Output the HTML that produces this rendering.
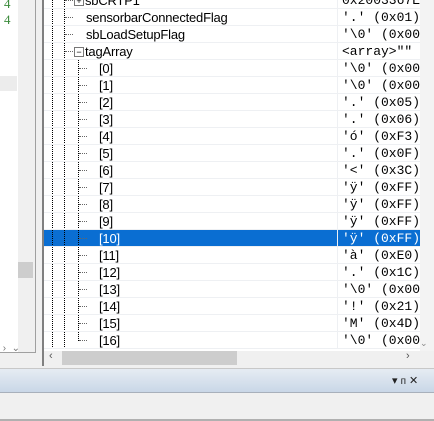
<!DOCTYPE html><html><head><style>
body{margin:0;width:434px;height:421px;overflow:hidden;background:#f0f0f0;font-family:"Liberation Sans",sans-serif;position:relative}
.a{position:absolute}
.row{position:absolute;left:44px;width:376px;height:17px;border-bottom:1px solid #eef0f3;box-sizing:border-box;background:#fff;overflow:hidden}
.n{position:absolute;font-size:13px;top:1px;color:#000;letter-spacing:-0.2px}
.v{position:absolute;left:298px;font-family:"Liberation Mono",monospace;font-size:13px;top:1px;color:#000;white-space:pre}
.sep{position:absolute;left:293px;top:0;width:1px;height:17px;background:#eef0f3}
.vl{position:absolute;border-left:1px dotted #000}
.hl{position:absolute;border-top:1px dotted #666;width:8px}
</style></head><body>
<div class="a" style="left:0;top:0;width:18px;height:352px;background:#fff"></div>
<div class="a" style="left:0;top:76px;width:17px;height:15px;background:#ececec"></div>
<div class="a" style="left:4px;top:-4px;color:#3a8a3a;font-size:13px;font-family:'Liberation Serif',serif">4</div>
<div class="a" style="left:4px;top:12px;color:#3a8a3a;font-size:13px;font-family:'Liberation Serif',serif">4</div>
<div class="a" style="left:18px;top:0;width:16px;height:352px;background:#f0f0f0"></div>
<div class="a" style="left:18px;top:262px;width:15px;height:16px;background:#cdcdcd"></div>
<div class="a" style="left:0;top:343px;width:34px;height:9px;font-size:10px;color:#777">&nbsp;›&nbsp;&nbsp;⌄</div>
<div class="a" style="left:0;top:352px;width:36px;height:1px;background:#a0a0a0"></div>
<div class="a" style="left:35px;top:0;width:1px;height:353px;background:#a0a0a0"></div>
<div class="a" style="left:42px;top:0;width:2px;height:366px;background:#808080"></div>
<div class="a" style="left:44px;top:0;width:376px;height:351px;background:#fff"></div>
<div class="a" style="left:420px;top:0;width:14px;height:351px;background:#f3f3f3"></div>
<div id="t"></div>
<div class="a" style="left:44px;top:351px;width:390px;height:14px;background:#f0f0f0"></div>
<div class="a" style="left:62px;top:351px;width:175px;height:14px;background:#cdcdcd"></div>
<div class="a" style="left:49px;top:350px;font-size:11px;color:#555">‹</div>
<div class="a" style="left:406px;top:350px;font-size:11px;color:#555">›</div>
<div class="a" style="left:420px;top:338px;font-size:9px;color:#888">⌄</div>
<div class="a" style="left:0;top:368px;width:434px;height:1px;background:#c8c8c8"></div>
<div class="a" style="left:0;top:369px;width:434px;height:23px;background:linear-gradient(#e6ecf3,#c9d7e7)"></div>
<div class="a" style="left:0;top:392px;width:434px;height:1px;background:#a8b0bb"></div>
<div class="a" style="left:0;top:419px;width:434px;height:2px;background:#b0b0b0"></div>
<div class="a" style="left:392px;top:374px;font-size:11px;color:#222">▾ <span style="font-size:10px">ᴨ</span> ✕</div>
<script>
var rows=[["sbCRTP1","0x2003367E",1,1],["sensorbarConnectedFlag","'.' (0x01)",1],["sbLoadSetupFlag","'\\0' (0x00",1],["tagArray","<array>\"\"",1,2]];
var vals=["'\\0' (0x00","'\\0' (0x00","'.' (0x05)","'.' (0x06)","'ó' (0xF3)","'.' (0x0F)","'<' (0x3C)","'ÿ' (0xFF)","'ÿ' (0xFF)","'ÿ' (0xFF)","'ÿ' (0xFF)","'à' (0xE0)","'.' (0x1C)","'\\0' (0x00","'!' (0x21)","'M' (0x4D)","'\\0' (0x00"];
for(var i=0;i<17;i++)rows.push(["["+i+"]",vals[i],2]);
var h="";
rows.forEach(function(r,i){var top=-8+i*17;var sel=(r[0]=="[10]");
h+='<div class="row" style="top:'+top+'px;'+(sel?'background:#0a6ed2;':'')+'">';
h+='<div class="vl" style="left:8px;top:0;height:17px"></div>';
if(r[2]==2){h+='<div class="vl" style="left:20px;top:0;height:17px"></div><div class="vl" style="left:34px;top:0;height:'+(r[0]=="[16]"?9:17)+'px"></div><div class="hl" style="left:35px;top:8px"></div>'}
else{h+='<div class="vl" style="left:20px;top:0;height:17px"></div><div class="hl" style="left:21px;top:8px"></div>';
if(r[3]){h+='<div style="position:absolute;left:30px;top:4px;width:8px;height:8px;border:1px solid #777;background:#fff;font-size:9px;line-height:8px;text-align:center">'+(r[3]==1?'+':'−')+'</div>'}}
h+='<div class="n" style="left:'+(r[2]==2?55:(r[3]?41:42))+'px;'+(sel?'color:#fff;':'')+'">'+r[0]+'</div>';
h+='<div class="sep"></div><div class="v" style="'+(sel?'color:#fff;':'')+'">'+r[1].replace(/</g,'&lt;').replace(/>/g,'&gt;')+'</div></div>';});
document.getElementById('t').innerHTML=h;
</script>
</body></html>
